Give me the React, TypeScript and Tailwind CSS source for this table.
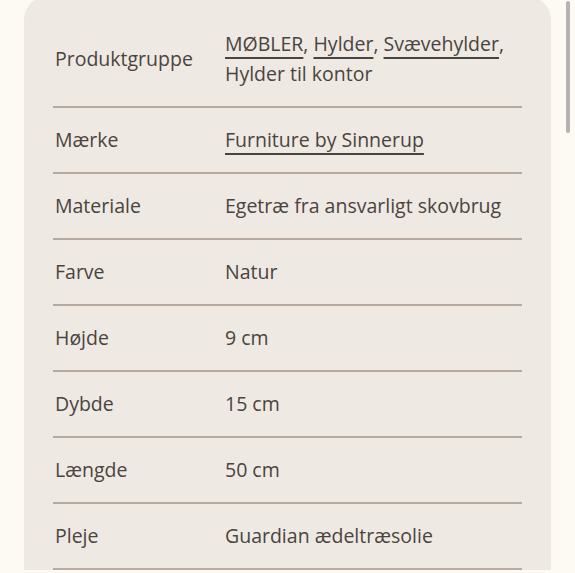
const rows: { label: string; value: React.ReactNode }[] = [
  {
    label: 'Produktgruppe',
    value: (
      <>
        <Link>MØBLER</Link>, <Link>Hylder</Link>, <Link>Svævehylder</Link>, Hylder til kontor
      </>
    ),
  },
  { label: 'Mærke', value: <Link>Furniture by Sinnerup</Link> },
  { label: 'Materiale', value: 'Egetræ fra ansvarligt skovbrug' },
  { label: 'Farve', value: 'Natur' },
  { label: 'Højde', value: '9 cm' },
  { label: 'Dybde', value: '15 cm' },
  { label: 'Længde', value: '50 cm' },
  { label: 'Pleje', value: 'Guardian ædeltræsolie' },
];

function Link({ children }: { children: React.ReactNode }) {
  return (
    <a className="underline decoration-[1.5px] underline-offset-[6px] decoration-[#4a443e]">{children}</a>
  );
}

export default function App() {
  return (
    <div
      className="h-[573px] w-[575px] overflow-hidden bg-[#fdfaf4] relative"
      style={{ fontFamily: '"Open Sans", "Noto Sans", sans-serif' }}
    >
      {/* Product spec card */}
      <div className="ml-[24px] mt-[-4px] w-[527px] rounded-t-[24px] bg-[#efe9e3] pl-[29px] pr-[29px] pt-[16px]">
        {rows.map((r) => (
          <div key={r.label} className="flex border-b-2 border-[#b8aca1] py-[17px] pl-[2px] text-[19.5px] leading-[30px] text-[#4a443e]">
            <div className="w-[170px] shrink-0 self-center">{r.label}</div>
            <div className="flex-1">{r.value}</div>
          </div>
        ))}
      </div>

      {/* scrollbar thumb */}
      <div className="absolute right-[5px] top-[1px] h-[132px] w-[4px] rounded-full bg-[#b3b3b3]" />
    </div>
  );
}
